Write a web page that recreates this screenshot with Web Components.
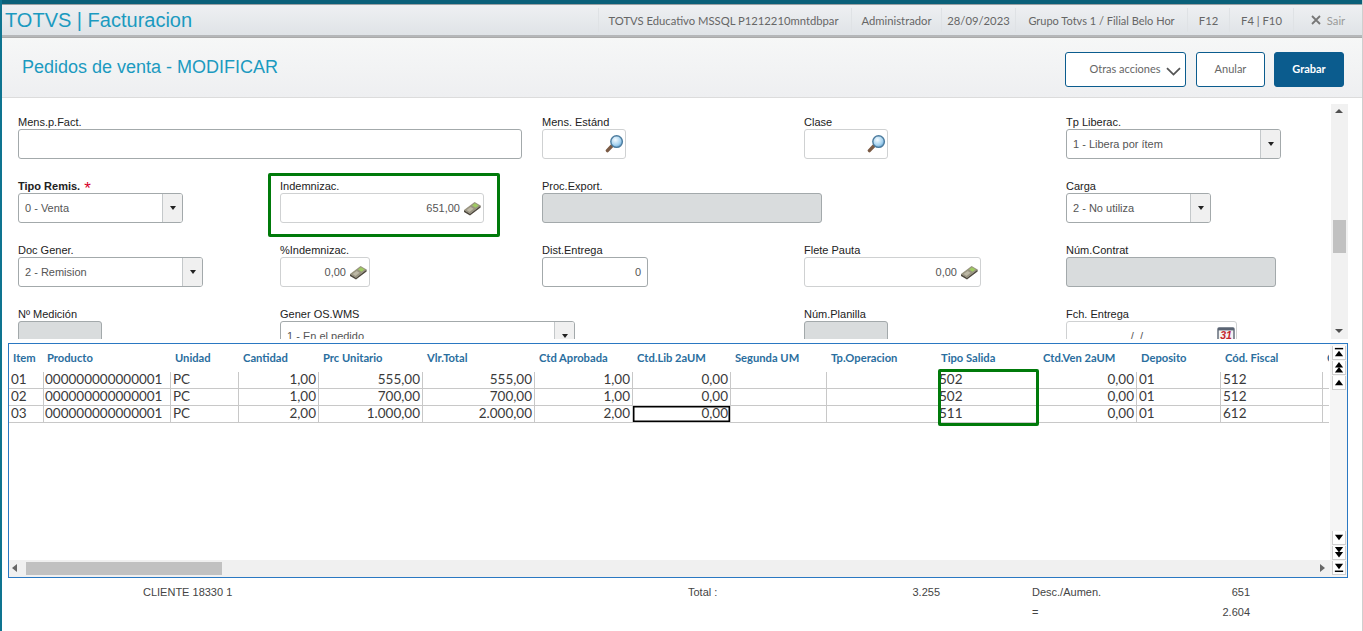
<!DOCTYPE html>
<html lang="es"><head><meta charset="utf-8"><title>TOTVS | Facturacion</title>
<style>
html,body{margin:0;padding:0;height:631px;overflow:hidden;background:#fff}
body{font-family:"Liberation Sans",Arial,sans-serif;display:flex;flex-direction:column;border-left:2px solid #0e7490;border-right:1px solid #cfcfcf;box-sizing:border-box;width:1363px}
</style></head><body>
<t-topbar></t-topbar>
<t-subbar></t-subbar>
<t-form>
  <t-field label="Mens.p.Fact." w="504" span="2" tone="dark"></t-field>
  <t-field label="Mens. Estánd" w="84" icon="search"></t-field>
  <t-field label="Clase" w="84" icon="search"></t-field>
  <t-field label="Tp Liberac." w="215" kind="select" value="1 - Libera por ítem"></t-field>

  <t-field label="Tipo Remis." w="165" kind="select" value="0 - Venta" required></t-field>
  <t-field label="Indemnizac." w="204" value="651,00" icon="money"></t-field>
  <t-field label="Proc.Export." w="280" kind="disabled"></t-field>
  <t-field label="" w="0"></t-field>
  <t-field label="Carga" w="145" kind="select" value="2 - No utiliza"></t-field>

  <t-field label="Doc Gener." w="185" kind="select" value="2 - Remision"></t-field>
  <t-field label="%Indemnizac." w="90" value="0,00" icon="money"></t-field>
  <t-field label="Dist.Entrega" w="106" value="0" tone="dark"></t-field>
  <t-field label="Flete Pauta" w="177" value="0,00" icon="money"></t-field>
  <t-field label="Núm.Contrat" w="210" kind="disabled"></t-field>

  <t-field label="Nº Medición" w="84" kind="disabled"></t-field>
  <t-field label="Gener OS.WMS" w="295" kind="select" value="1 - En el pedido"></t-field>
  <t-field label="" w="0"></t-field>
  <t-field label="Núm.Planilla" w="84" kind="disabled"></t-field>
  <t-field label="Fch. Entrega" w="171" value=" /  / " icon="cal" center></t-field>
</t-form>
<t-datagrid></t-datagrid>
<t-footer></t-footer>
<script>
const ICONS={
money:`<svg width="18" height="15" viewBox="0 0 18 15"><path d="M1 9 11.6 1 17.6 4.6 7 12.8z" fill="#98937f"/><path d="M1 9 7 12.8 17.6 4.6V6.4L7 14.6 1 11z" fill="#4f493e"/><path d="M9 4.6 11.9 2.2 15.6 4.5 12.6 6.8z" fill="#9fcb62"/><path d="M3.5 9 7.6 6 10.6 7.8 6.6 10.9z" fill="#bdb8a6"/></svg>`,
search:`<svg width="19" height="18" viewBox="0 0 19 18"><defs><radialGradient id="s" cx=".4" cy=".35" r=".75"><stop offset="0" stop-color="#f4fbff"/><stop offset=".6" stop-color="#a6d2ef"/><stop offset="1" stop-color="#4d93c8"/></radialGradient></defs><path d="M2.4 15.6 7 10.8" stroke="#7a5a44" stroke-width="3.4" stroke-linecap="round"/><circle cx="11.6" cy="6.6" r="5.8" fill="url(#s)" stroke="#4d7c9e" stroke-width="1.4"/></svg>`,
cal:`<svg width="18" height="18" viewBox="0 0 18 18"><rect x="1" y="1" width="16" height="16" rx="1" fill="#f4f4f4" stroke="#5a6473" stroke-width="1.4"/><rect x="1" y="1" width="16" height="2.4" fill="#5a6473"/><text x="9" y="11.5" text-anchor="middle" font-family="Liberation Sans" font-size="10.5" font-weight="700" font-style="italic" fill="#c4262e">31</text></svg>`
};
function def(name,html){
  customElements.define(name,class extends HTMLElement{
    constructor(){super();this.attachShadow({mode:"open"})}
    connectedCallback(){this.shadowRoot.innerHTML=typeof html==="function"?html(this):html;}
  });
}
def("t-topbar",`<style>
:host{display:flex;align-items:center;flex:none;height:33px;margin-top:4px;box-sizing:border-box;border-top:1px solid #9aa0a3;border-bottom:2px solid #b5b7b9;background:linear-gradient(#eef0f2,#dfe3e7);box-shadow:0 -4px 0 #0a6079;font-family:"Liberation Sans",sans-serif}
.t{font-size:20px;color:#1b9ac0;padding-left:3px;flex:1;white-space:nowrap}
.i{font-family:Lato,sans-serif;font-size:11.25px;color:#666;height:24px;display:flex;align-items:center;justify-content:center;box-sizing:border-box;border-left:1px solid #dfe2e5;white-space:nowrap}
.s{color:#9a9a9a}
</style>
<div class="t">TOTVS | Facturacion</div>
<div class="i" style="width:253px;padding-right:3px">TOTVS Educativo MSSQL P1212210mntdbpar</div>
<div class="i" style="width:90px">Administrador</div>
<div class="i" style="width:74px">28/09/2023</div>
<div class="i" style="width:172px;font-size:11px">Grupo Totvs 1 / Filial Belo Hor</div>
<div class="i" style="width:42px">F12</div>
<div class="i" style="width:64px">F4 | F10</div>
<div class="i" style="width:69px"><svg width="10" height="10" viewBox="0 0 10 10" style="margin-right:6px"><path d="M1 1 9 9M9 1 1 9" stroke="#777" stroke-width="1.8"/></svg><span class="s">Sair</span></div>`);
def("t-subbar",`<style>
:host{display:flex;align-items:center;flex:none;height:61px;box-sizing:border-box;border-bottom:1px solid #dcdcdc;background:linear-gradient(#f6f7f7,#eeeff1);padding:0 18px 0 20px;gap:10px;border-top:1px solid #aaa}
.t{flex:1;font-size:18px;color:#1b9ac0}
.b{font-family:Lato,sans-serif;font-size:11px;height:35px;box-sizing:border-box;border:1px solid #0b5c8e;border-radius:3px;background:#fff;color:#666;display:flex;align-items:center;justify-content:center;margin-top:3px;padding-bottom:1px}
.p{background:#0b5c8e;color:#fff;font-weight:700}
</style>
<div class="t">Pedidos de venta - MODIFICAR</div>
<div class="b" style="width:121px;padding-left:19px;gap:5px;box-sizing:border-box"><span>Otras acciones</span><svg width="15" height="9" viewBox="0 0 15 9" style="margin-top:5px"><path d="M1 1.2 7.5 7.6 14 1.2" fill="none" stroke="#555" stroke-width="1.8"/></svg></div>
<div class="b" style="width:69px">Anular</div>
<div class="b p" style="width:70px;margin-left:-1px">Grabar</div>`);
def("t-form",`<style>
:host{display:block;position:relative;flex:none;height:241px;overflow:hidden;font-family:"Liberation Sans",sans-serif}
.g{display:grid;grid-template-columns:repeat(5,262px);grid-auto-rows:64px;padding:17px 0 0 16px}
.mark{position:absolute;left:266px;top:75px;width:232px;height:64px;box-sizing:border-box;border:3px solid #007a0a;border-radius:2px;pointer-events:none}
.sb{position:absolute;left:1329px;top:6px;width:17px;height:235px;background:#f1f1f1}
.th{position:absolute;left:2px;top:116px;width:13px;height:33px;background:#c1c1c1}
.u,.d{position:absolute;left:4px;width:0;height:0;border:4px solid transparent}
.u{top:5px;border-bottom:4px solid #505050;border-top:0}
.d{bottom:6px;border-top:4px solid #505050;border-bottom:0}
</style>
<div class="g"><slot></slot></div>
<div class="mark"></div>
<div class="sb"><div class="u"></div><div class="th"></div><div class="d"></div></div>`);
def("t-field",h=>{
  const w=+h.getAttribute("w"),kind=h.getAttribute("kind")||"text",val=h.getAttribute("value")||"",icon=h.getAttribute("icon"),dark=h.getAttribute("tone")==="dark";
  const label=h.getAttribute("label"),req=h.hasAttribute("required");
  if(!w)return `<style>:host{display:block}</style>`;
  const span=h.getAttribute("span");
  const bc=(kind==="select"||kind==="disabled"||dark)?"#a3a9ab":"#cfd1d2";
  return `<style>
:host{display:block;${span?`grid-column:span ${span};`:""}font-size:11px;color:#222;min-width:0}
.l{height:14px;line-height:14px;white-space:nowrap;${req?"font-weight:700;":""}}
.r{color:#d6002a;font-size:17px;font-weight:400;line-height:10px;margin-left:4px;vertical-align:-4px}
.b{width:${w}px;height:30px;box-sizing:border-box;border:1px solid ${bc};border-radius:3px;display:flex;align-items:center;background:${kind==="disabled"?"#d9dcdd":"#fff"};overflow:hidden;color:#555}
.v{flex:1;padding:0 6px;white-space:pre;text-align:${kind==="select"?"left":"right"};${icon==="money"?"padding-right:3px;":""}${h.hasAttribute("center")?"padding-right:71px;":""}}
.a{width:19px;align-self:stretch;border-left:1px solid #c4c8ca;background:#f0f0f0;display:flex;align-items:center;justify-content:center}
.a i{width:0;height:0;border:3.5px solid transparent;border-top:4px solid #222;border-bottom:0}
svg{flex:none;margin-right:${icon==="money"?2:1}px;display:block}
</style>
<div class="l">${label}${req?'<span class="r">*</span>':""}</div>
<div class="b"><span class="v">${val}</span>${kind==="select"?'<span class="a"><i></i></span>':""}${icon?ICONS[icon]:""}</div>`;
});
const cols=[35,127,68,80,104,112,98,98,96,112,98,100,84,102,6];
const heads=["Item","Producto","Unidad","Cantidad","Prc Unitario","Vlr.Total","Ctd Aprobada","Ctd.Lib 2aUM","Segunda UM","Tp.Operacion","Tipo Salida","Ctd.Ven 2aUM","Deposito","Cód. Fiscal","C"];
const rows=[
["01","000000000000001","PC","1,00","555,00","555,00","1,00","0,00","","","502","0,00","01","512",""],
["02","000000000000001","PC","1,00","700,00","700,00","1,00","0,00","","","502","0,00","01","512",""],
["03","000000000000001","PC","2,00","1.000,00","2.000,00","2,00","0,00","","","511","0,00","01","612",""]];
const right=new Set([3,4,5,6,7,11]);
const tpl=cols.map(c=>c+"px").join(" ");
const tri=(y,up)=>up?`<path d="M2 ${y+6} 6.5 ${y} 11 ${y+6}z"/>`:`<path d="M2 ${y} 6.5 ${y+6} 11 ${y}z"/>`;
const btn=c=>`<div class="btn"><svg width="13" height="13" viewBox="0 0 13 13" fill="#000">${c}</svg></div>`;
def("t-datagrid",`<style>
:host{display:block;position:relative;flex:none;width:1340px;height:235px;margin:4px 0 0 6px;box-sizing:border-box;border:1px solid #2a78c2;background:#fff;overflow:hidden}
.h,.w{display:grid;grid-template-columns:${tpl};width:1320px}
.h{height:27px;align-items:center;font-family:Lato,sans-serif;font-size:11.2px;font-weight:700;color:#2a6e9e}
.h span{padding-left:4px;white-space:nowrap;overflow:hidden}
.h span:nth-child(2){padding-left:3px}
.h span:nth-child(11){padding-left:2px}
.h span:nth-child(12){padding-left:6px}
.w{height:17px;font-family:Lato,sans-serif;font-size:13.5px;color:#3a3a3a;box-sizing:border-box;border-bottom:1px solid #c8c8c8}
.w span{height:16px;line-height:15px;padding:0 2px 0 2px;border-right:1px solid #c8c8c8;white-space:nowrap;box-sizing:border-box;overflow:hidden}
.w span:nth-child(2){padding-left:1px}
.w span:nth-child(11){padding-left:0}
.w span.r{text-align:right}
.w span:last-child{border-right:0}
.w span.sel{box-shadow:inset 0 0 0 1.5px #000}
.top{height:1px}
.vb{position:absolute;right:0;top:0;width:17px;bottom:0;background:#f5f5f5;display:flex;flex-direction:column;justify-content:space-between;padding:2px 0 2px;box-sizing:border-box}
.st{display:flex;flex-direction:column;gap:1px;align-items:center}
.btn{width:14px;height:14px;background:#fff;border:1px solid #cfcfcf;border-width:0 1px 1px 1px;box-sizing:border-box;display:flex;align-items:center;justify-content:center;overflow:hidden}
.hb{position:absolute;left:0;right:17px;bottom:0;height:17px;background:#f0f0f0}
.hb b{position:absolute;left:17px;top:2px;width:196px;height:13px;background:#c1c1c1}
.hb i{position:absolute;top:4px;width:0;height:0;border:4px solid transparent}
.hb .l{left:3px;border-right:5px solid #666;border-left:0}
.hb .r{right:5px;border-left:5px solid #666;border-right:0}
.mark{position:absolute;left:929px;top:25px;width:101px;height:57px;box-sizing:border-box;border:3px solid #007a0a;border-radius:2px;pointer-events:none}
</style>
<div class="h">${heads.map(t=>`<span>${t}</span>`).join("")}</div><div class="top"></div>
${rows.map((r,i)=>`<div class="w">${r.map((c,j)=>`<span class="${right.has(j)?"r":""}${i===2&&j===7?" sel":""}">${c}</span>`).join("")}</div>`).join("")}
<div class="vb"><div class="st">${btn(`<rect x="2" y="1.5" width="9" height="1.6"/>`+tri(4.5,true))}${btn(tri(0.5,true)+tri(6,true))}${btn(tri(3.5,true))}</div>
<div class="st">${btn(tri(3.5,false))}${btn(tri(0.5,false)+tri(6,false))}${btn(tri(2.5,false)+`<rect x="2" y="9.8" width="9" height="1.6"/>`)}</div></div>
<div class="hb"><i class="l"></i><b></b><i class="r"></i></div>
<div class="mark"></div>`);
def("t-footer",`<style>
:host{display:grid;flex:none;grid-template-columns:141px 545px 60px 192px 92px 130px 88px;grid-auto-rows:20px;font-size:11px;color:#444;padding-top:4px;font-family:"Liberation Sans",sans-serif}
span{line-height:20px;white-space:nowrap}
.r{text-align:right}
</style>
<span style="grid-column:2">CLIENTE 18330 1</span><span>Total :</span><span class="r">3.255</span>
<span style="grid-column:6">Desc./Aumen.</span><span class="r">651</span>
<span style="grid-column:6">=</span><span class="r">2.604</span>`);
</script>
</body></html>
